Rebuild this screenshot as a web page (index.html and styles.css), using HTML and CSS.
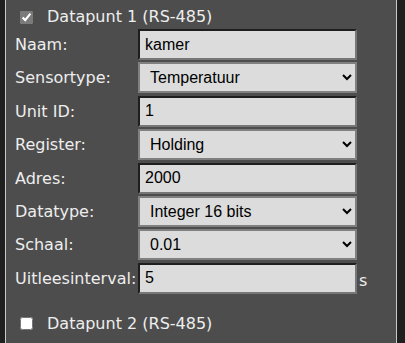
FILE: index.html
```html
<!DOCTYPE html>
<html lang="nl">
<head>
	<meta charset="UTF-8">
	<title>Datapunten</title>
	<link rel="stylesheet" href="styles.css">
</head>
<body>
	<div class="panel">
		<div class="head">
			<input type="checkbox" class="chk" checked>
			<span class="title">Datapunt 1 (RS-485)</span>
		</div>
		<div class="fields">
			<label class="lbl">Naam:</label>
			<input type="text" class="txt" value="kamer">
			<span></span>

			<label class="lbl">Sensortype:</label>
			<select class="sel">
				<option>Temperatuur</option>
				<option>Vochtigheid</option>
			</select>
			<span></span>

			<label class="lbl">Unit ID:</label>
			<input type="text" class="txt" value="1">
			<span></span>

			<label class="lbl">Register:</label>
			<select class="sel">
				<option>Holding</option>
				<option>Input</option>
			</select>
			<span></span>

			<label class="lbl">Adres:</label>
			<input type="text" class="txt" value="2000">
			<span></span>

			<label class="lbl">Datatype:</label>
			<select class="sel">
				<option>Integer 16 bits</option>
				<option>Integer 32 bits</option>
			</select>
			<span></span>

			<label class="lbl">Schaal:</label>
			<select class="sel">
				<option>0.01</option>
				<option>0.1</option>
				<option>1</option>
			</select>
			<span></span>

			<label class="lbl">Uitleesinterval:</label>
			<input type="text" class="txt" value="5">
			<span class="unit">s</span>
		</div>
		<div class="head head2">
			<input type="checkbox" class="chk">
			<span class="title">Datapunt 2 (RS-485)</span>
		</div>
	</div>
</body>
</html>
```

FILE: styles.css
```css
html, body {
	margin: 0;
	padding: 0;
}
body {
	background: #1f1f1f;
	font-family: "DejaVu Sans", Verdana, sans-serif;
	font-size: 16px;
	color: #eeeeee;
	height: 343px;
	overflow: hidden;
}
.panel {
	margin-left: 5px;
	width: 392px;
	height: 343px;
	background: #4d4d4d;
	border-left: 1px solid #c8c8c8;
	border-right: 1px solid #c8c8c8;
	padding-left: 9px;
	box-sizing: border-box;
}

/* kop met checkbox */
.head {
	display: flex;
	align-items: center;
	height: 24px;
	padding-top: 5px;
}
.head2 {
	padding-top: 18px;
}
.chk {
	width: 13px;
	height: 13px;
	margin: 0 14px 0 5px;
	accent-color: #7a7a7a;
}
.title {
	line-height: 18px;
}

/* velden */
.fields {
	display: grid;
	grid-template-columns: 121px 219px auto;
	column-gap: 2px;
	row-gap: 2.4px;
	align-items: center;
}
.lbl {
	white-space: nowrap;
}
.txt, .sel {
	height: 31px;
	width: 219px;
	box-sizing: border-box;
	margin: 0;
	font-family: "Liberation Sans", Arial, sans-serif;
	font-size: 16px;
	color: #000;
	background: #dcdcdc;
}
.txt {
	padding: 0 5px;
	border-width: 2px;
	border-style: solid;
	border-color: #1e1e1e #777777 #777777 #1e1e1e;
	outline: none;
}
.sel {
	padding: 0 6px;
	border: 2px solid #808080;
	border-radius: 0;
}
.unit {
	font-size: 16px;
	align-self: end;
	padding-bottom: 4px;
}
```
